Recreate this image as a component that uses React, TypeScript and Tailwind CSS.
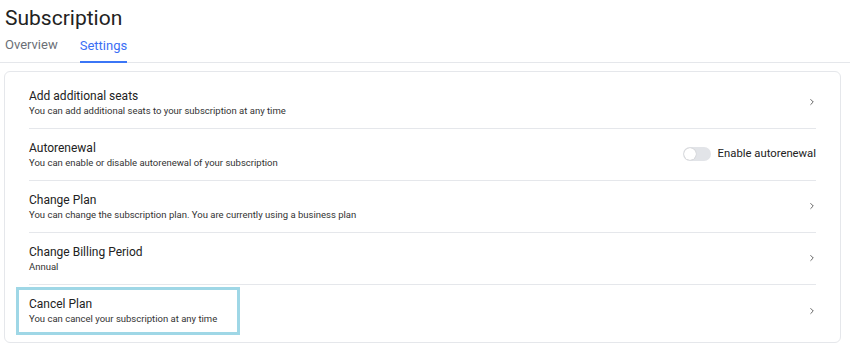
import { ChevronRight } from "lucide-react";

const rows = [
  {
    title: "Add additional seats",
    text: "You can add additional seats to your subscription at any time",
  },
  {
    title: "Autorenewal",
    text: "You can enable or disable autorenewal of your subscription",
    toggle: true,
  },
  {
    title: "Change Plan",
    text: "You can change the subscription plan. You are currently using a business plan",
  },
  { title: "Change Billing Period", text: "Annual" },
  {
    title: "Cancel Plan",
    text: "You can cancel your subscription at any time",
    focused: true,
  },
];

function Toggle() {
  return (
    <div className="flex items-center gap-[7px]">
      <span className="flex h-[14px] w-[28px] items-center rounded-full bg-[#e2e4e8] p-[1px]">
        <span className="h-[12px] w-[12px] rounded-full bg-white shadow-[0_0_1px_rgba(0,0,0,0.3)]" />
      </span>
      <span className="text-[11.3px] text-[#222]">Enable autorenewal</span>
    </div>
  );
}

export default function App() {
  return (
    <div className="h-[350px] w-[850px] bg-white font-['Roboto',sans-serif] text-[#222]">
      <h1 className="px-[5px] pt-[4px] text-[21px] leading-[28px]">
        Subscription
      </h1>
      <div className="mt-[3px] flex gap-[22px] border-b border-gray-200 px-[5px]">
        <button className="border-b-2 border-transparent pb-[5px] text-[13px] text-[#6b6f76]">
          Overview
        </button>
        <button className="-mb-px border-b-2 border-[#3b76f6] pb-[4px] text-[13px] text-[#3b6ef5]">
          Settings
        </button>
      </div>

      <div className="ml-[4px] mr-[9px] mt-[8px] rounded-[6px] border border-gray-200 px-[24px] py-[5px]">
        {rows.map((row, i) => (
          <div
            key={row.title}
            className={
              "flex h-[52px] items-center justify-between " +
              (i < rows.length - 1 ? "border-b border-gray-200" : "")
            }
          >
            <div
              className={
                row.focused
                  ? "-ml-[13px] flex h-[48px] w-[224px] flex-col justify-center border-[3px] border-[#9fd7e6] pl-[10px]"
                  : "flex flex-col pt-[1px]"
              }
            >
              <span className="text-[12px] leading-[16px]">{row.title}</span>
              <span className="text-[9.5px] leading-[14px] text-[#333]">{row.text}</span>
            </div>
            {row.toggle ? (
              <Toggle />
            ) : (
              <ChevronRight className="mr-[-1px] h-[10px] w-[10px] text-[#555]" strokeWidth={2.2} />
            )}
          </div>
        ))}
      </div>
    </div>
  );
}
